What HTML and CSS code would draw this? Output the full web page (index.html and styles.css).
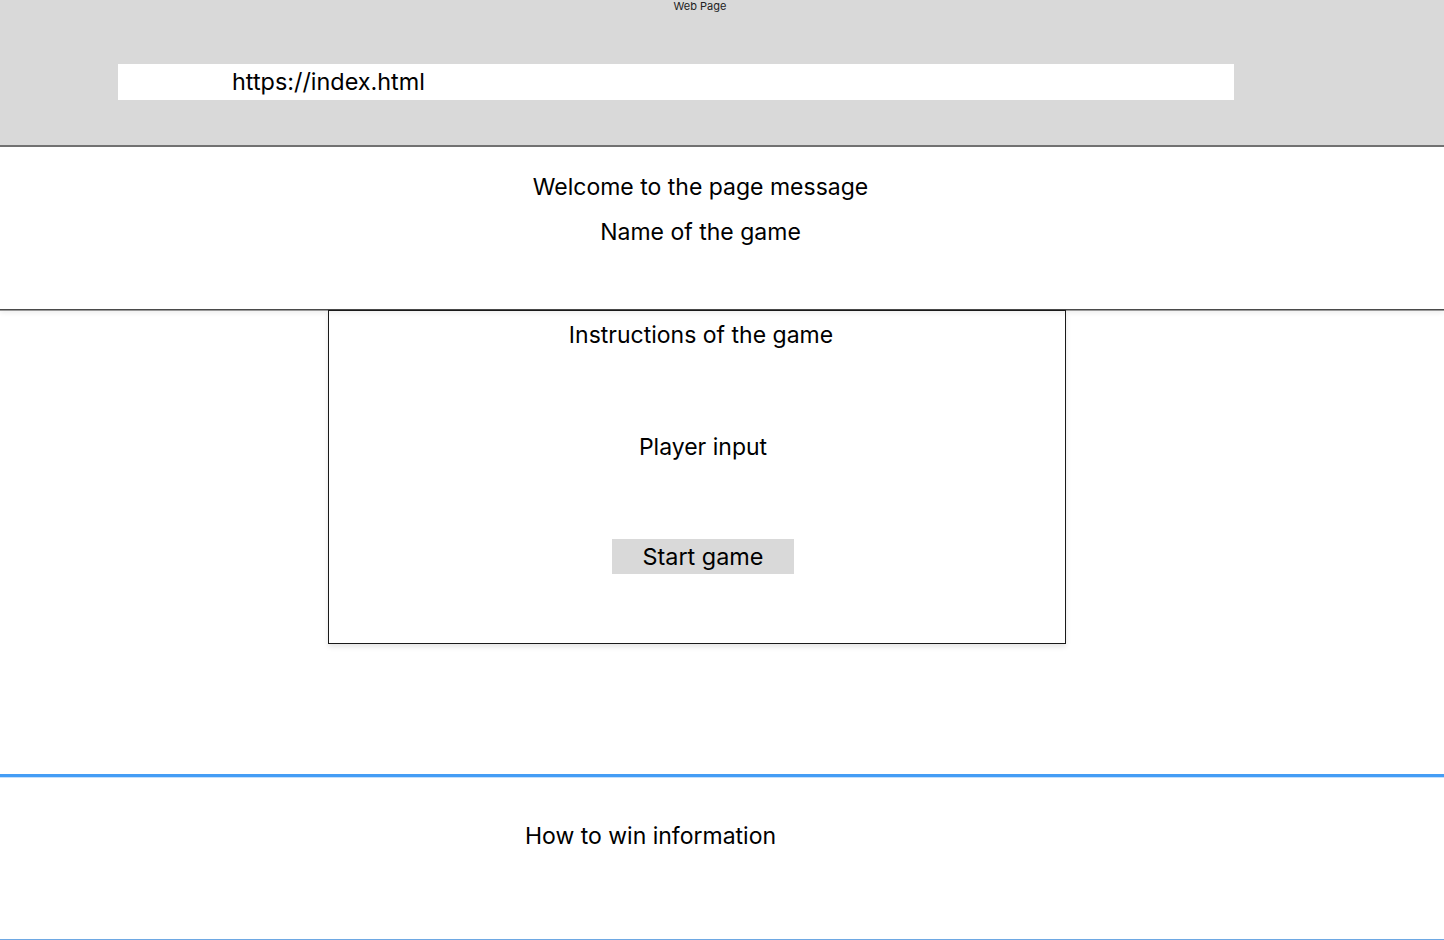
FILE: index.html
```html
<!DOCTYPE html>
<html lang="en">
<head>
<meta charset="utf-8">
<title>Web Page</title>
<link rel="stylesheet" href="styles.css">
</head>
<body>
<header class="browser">
  <div class="browser-title">Web Page</div>
  <div class="url-bar">https://index.html</div>
</header>
<section class="intro">
  <p class="line">Welcome to the page message</p>
  <p class="line">Name of the game</p>
</section>
<main class="game-area">
  <div class="game-box">
    <p class="line">Instructions of the game</p>
    <p class="line player">Player input</p>
    <button class="start-btn">Start game</button>
  </div>
</main>
<footer class="win-info">
  <p class="line">How to win information</p>
</footer>
</body>
</html>
```

FILE: styles.css
```css
* { box-sizing: border-box; }
html, body { margin: 0; padding: 0; background: #ffffff; }
body {
  font-family: Inter, "Noto Sans", "Liberation Sans", sans-serif;
  color: #000;
  width: 1444px;
  height: 940px;
  overflow: hidden;
}
.line {
  margin: 0;
  font-size: 23px;
  line-height: 28px;
  text-align: center;
}
.browser {
  height: 147px;
  background: #d9d9d9;
  border-bottom: 2px solid #727272;
  width: 1444px;
}
.browser-title {
  width: 1400px;
  text-align: center;
  font-size: 11px;
  line-height: 13px;
  color: #222;
}
.url-bar {
  margin: 51px 0 0 118px;
  width: 1116px;
  height: 36px;
  background: #fff;
  padding-left: 114px;
  font-size: 23.4px;
  line-height: 36px;
}
.intro {
  height: 163px;
  width: 1444px;
  padding-top: 26px;
  border-bottom: 1px solid #4a4a4a;
  box-shadow: 0 1px 0 #9a9a9a, 0 3px 5px rgba(0, 0, 0, 0.07);
  display: flex;
  flex-direction: column;
  gap: 17px;
}
.intro .line { width: 1401px; }
.game-area {
  height: 464px;
  width: 1400px;
}
.game-box {
  margin-left: 328px;
  width: 738px;
  height: 334px;
  border: 1px solid #1a1a1a;
  box-shadow: 0 3px 5px rgba(0, 0, 0, 0.1);
  display: flex;
  flex-direction: column;
  align-items: center;
  padding-top: 10px;
}
.game-box .line { width: 100%; padding-left: 8px; }
.player { margin-top: 84px; padding-left: 12px !important; }
.start-btn {
  margin-top: 78px;
  margin-left: 12px;
  width: 182px;
  height: 35px;
  background: #d9d9d9;
  border: none;
  border-radius: 0;
  font-family: inherit;
  font-size: 23.4px;
  color: #000;
  padding: 0;
  line-height: 35px;
}
.win-info {
  height: 166px;
  width: 1444px;
  border-top: 3px solid #449df5;
  box-shadow: inset 0 1px 0 #c3e0fd;
  border-bottom: 1px solid #6ea8e3;
  padding-top: 45px;
}
.win-info .line { width: 1301px; }
```
